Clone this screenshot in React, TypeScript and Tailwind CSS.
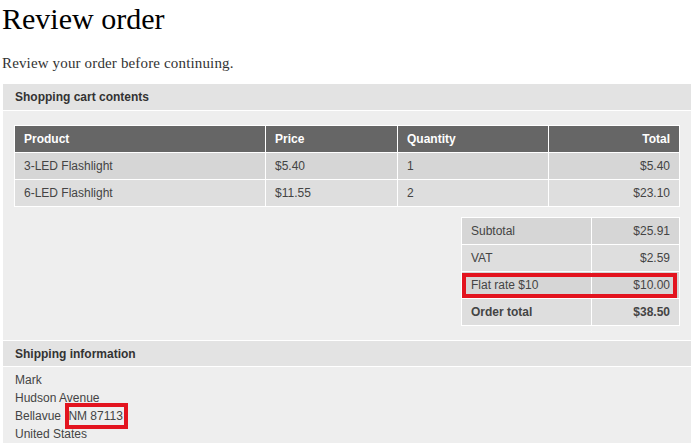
import React from "react";

const items = [
  { name: "3-LED Flashlight", price: "$5.40", qty: "1", total: "$5.40", bg: "bg-[#d6d6d6]" },
  { name: "6-LED Flashlight", price: "$11.55", qty: "2", total: "$23.10", bg: "bg-[#dedede]" },
];

export default function App() {
  return (
    <div className="w-[695px] h-[443px] overflow-hidden bg-white text-[#333]" style={{ fontFamily: "'Liberation Sans', Arial, sans-serif" }}>
      <div className="pl-[3px] pr-[4px]">
        <h1 className="text-[30px] leading-[36px] text-black -ml-[1px] pt-[1px]" style={{ fontFamily: "'Liberation Serif', Georgia, serif" }}>
          Review order
        </h1>
        <p className="text-[15px] tracking-[0.15px] leading-[18px] mt-[17px] text-[#333] -ml-[1px]" style={{ fontFamily: "'Liberation Serif', Georgia, serif" }}>
          Review your order before continuing.
        </p>

        <div className="mt-[12px]">
          <div className="h-[27px] bg-[#e3e3e3] border-b border-white pl-[12px] flex items-center text-[12px] font-bold text-[#333]">
            Shopping cart contents
          </div>
          <div className="bg-[#eeeeee] pt-[14px] pb-[14px] px-[11px]">
            <table className="w-full border-collapse text-[12px]">
              <thead>
                <tr className="bg-[#666666] text-white font-bold h-[27px]">
                  <th className="border border-white text-left font-bold pl-[9px] w-[251px]">Product</th>
                  <th className="border border-white text-left font-bold pl-[9px] w-[132px]">Price</th>
                  <th className="border border-white text-left font-bold pl-[9px] w-[151px]">Quantity</th>
                  <th className="border border-white text-right font-bold pr-[9px]">Total</th>
                </tr>
              </thead>
              <tbody>
                {items.map((it) => (
                  <tr key={it.name} className={`${it.bg} h-[27px] text-[#444]`}>
                    <td className="border border-white pl-[9px]">{it.name}</td>
                    <td className="border border-white pl-[9px]">{it.price}</td>
                    <td className="border border-white pl-[9px]">{it.qty}</td>
                    <td className="border border-white text-right pr-[9px]">{it.total}</td>
                  </tr>
                ))}
              </tbody>
            </table>

            <div className="flex justify-end mt-[10px]">
              <table className="w-[219px] border-collapse text-[12px] text-[#444]">
                <tbody>
                  <tr className="bg-[#d6d6d6] h-[27px]">
                    <td className="border border-white pl-[9px] w-[130px]">Subtotal</td>
                    <td className="border border-white text-right pr-[9px]">$25.91</td>
                  </tr>
                  <tr className="bg-[#dedede] h-[27px]">
                    <td className="border border-white pl-[9px]">VAT</td>
                    <td className="border border-white text-right pr-[9px]">$2.59</td>
                  </tr>
                  <tr className="bg-[#d6d6d6] h-[27px]">
                    <td className="border border-white pl-[9px] relative">
                      Flat rate $10
                      <span className="absolute left-0 top-[1px] w-[215px] h-[25px] border-[4px] border-[#e3141f] pointer-events-none" />
                    </td>
                    <td className="border border-white text-right pr-[9px]">$10.00</td>
                  </tr>
                  <tr className="bg-[#dedede] h-[27px] font-bold">
                    <td className="border border-white pl-[9px]">Order total</td>
                    <td className="border border-white text-right pr-[9px]">$38.50</td>
                  </tr>
                </tbody>
              </table>
            </div>
          </div>
        </div>

        <div className="border-t border-white">
          <div className="h-[26px] bg-[#e3e3e3] border-b border-white pl-[12px] flex items-center text-[12px] font-bold text-[#333]">
            Shipping information
          </div>
          <div className="bg-[#eeeeee] pl-[12px] pt-[4px] pb-[20px] text-[12px] leading-[18px] text-[#444]">
            <div>Mark</div>
            <div>Hudson Avenue</div>
            <div>
              Bellavue{" "}
              <span className="relative ml-[4px]">
                NM 87113
                <span className="absolute -left-[3px] -right-[5px] -top-[6px] -bottom-[6px] border-[4px] border-[#e3141f]" />
              </span>
            </div>
            <div>United States</div>
          </div>
        </div>
      </div>
    </div>
  );
}
